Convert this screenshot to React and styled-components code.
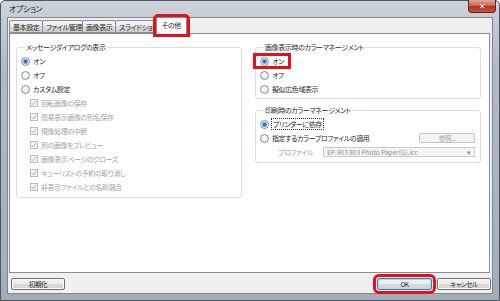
import styled, { createGlobalStyle, css } from "styled-components";

const GlobalStyle = createGlobalStyle`
  html, body { margin: 0; padding: 0; background: #fff; }
  body {
    width: 500px;
    height: 301px;
    overflow: hidden;
    font-family: "Noto Sans CJK JP", "Noto Sans", sans-serif;
  }
`;

// proportional kana, like the Meiryo UI face in the original dialog
const jp = css`
  font-family: "Noto Sans CJK JP", "Noto Sans", sans-serif;
  font-feature-settings: "palt" 1;
  font-variant-east-asian: proportional-width;
  letter-spacing: -0.4px;
`;

const redMark = css`
  outline: 3px solid #e5101b;
  outline-offset: ${({ $offset }) => $offset || 0}px;
`;

const Window = styled.div`
  box-sizing: border-box;
  width: 500px;
  height: 301px;
  display: flex;
  flex-direction: column;
  padding: 0 6px 6px 6px;
  border: 1px solid #4c5764;
  border-radius: 5px 5px 0 0;
  background: linear-gradient(#cdd3da, #b3bcc6 60px, #a2adb8);
`;

const TitleBar = styled.div`
  height: 16px;
  display: flex;
  justify-content: space-between;
  align-items: flex-start;
`;

const Title = styled.span`
  ${jp}
  padding: 3px 0 0 2px;
  font-size: 8px;
  line-height: 10px;
  color: #1b1f24;
`;

const CloseButton = styled.span`
  box-sizing: border-box;
  width: 28px;
  height: 13px;
  margin: -1px -3px 0 0;
  display: flex;
  align-items: center;
  justify-content: center;
  border: 1px solid #5d2420;
  border-top: none;
  border-radius: 0 0 4px 4px;
  background: linear-gradient(#e2a69c, #d0675a 45%, #b5321f 55%, #c9553c);
  color: #fff;
  font-family: "DejaVu Sans", sans-serif;
  font-size: 8px;
  font-weight: bold;
  text-shadow: 0 0 2px #5d1a12;
`;

const Content = styled.div`
  flex: 1;
  display: flex;
  flex-direction: column;
  background: #f0f0f0;
  border: 1px solid #7c8894;
`;

const TabRow = styled.div`
  height: 15px;
  display: flex;
  align-items: flex-end;
  padding-left: 2px;
`;

const Tab = styled.div`
  ${jp}
  box-sizing: border-box;
  width: ${({ $w }) => $w}px;
  height: ${({ $active }) => ($active ? 17 : 13)}px;
  margin-left: ${({ $active }) => ($active ? -2 : -1)}px;
  margin-bottom: ${({ $active }) => ($active ? -1 : 0)}px;
  position: relative;
  z-index: ${({ $active }) => ($active ? 2 : 1)};
  padding: ${({ $active }) => ($active ? "2px 0 0 5px" : "1px 0 0 3px")};
  overflow: hidden;
  white-space: nowrap;
  border: 1px solid #898c95;
  border-bottom: ${({ $active }) => ($active ? "none" : "1px solid #898c95")};
  border-radius: 2px 2px 0 0;
  background: ${({ $active }) =>
    $active ? "#fff" : "linear-gradient(#f4f4f4, #ebebeb 50%, #dddddd 50%, #cfcfcf)"};
  font-size: 7px;
  line-height: 10px;
  color: #2a2a2a;
  ${({ $marked }) => $marked && redMark}
`;

const Panel = styled.div`
  box-sizing: border-box;
  height: 240px;
  margin: 0 2px 0 1px;
  padding: 8px 8px 0 6px;
  display: grid;
  grid-template-columns: 226px 226px;
  column-gap: 13px;
  align-items: start;
  background: #fff;
  border: 1px solid #898c95;
`;

const Column = styled.div`
  display: flex;
  flex-direction: column;
  gap: 6px;
`;

const Group = styled.fieldset`
  margin: 0;
  padding: 2px 5px ${({ $pb }) => $pb || 2}px 4px;
  border: 1px solid #d5dfe5;
  border-radius: 3px;
  min-width: 0;
`;

const Legend = styled.legend`
  ${jp}
  margin-left: 4px;
  padding: 0 1px;
  font-size: 7px;
  line-height: 10px;
  color: #2a2a2a;
`;

const Row = styled.div`
  height: 14px;
  display: flex;
  align-items: center;
  padding-left: ${({ $indent }) => $indent || 0}px;
`;

const Option = styled.span`
  display: inline-flex;
  align-items: center;
  height: 10px;
  gap: 3px;
  ${({ $marked }) =>
    $marked &&
    css`
      padding: 0 4px;
      margin-left: -4px;
      ${redMark}
    `}
`;

const Radio = styled.span`
  box-sizing: border-box;
  width: 9px;
  height: 9px;
  border-radius: 50%;
  border: 1px solid #8d9196;
  background: ${({ $checked }) =>
    $checked
      ? "radial-gradient(circle, #1d5fa8 0, #3a8ad6 1.6px, #9fcdf2 2.6px, #eef2f6 3px)"
      : "radial-gradient(circle at 45% 40%, #fdfdfd, #dadde1)"};
`;

const Check = styled.span`
  box-sizing: border-box;
  width: 8px;
  height: 8px;
  display: inline-flex;
  border: 1px solid #b8bcc0;
  background: #f4f5f6;
  svg { width: 6px; height: 6px; }
`;

const Label = styled.span`
  ${jp}
  font-size: 7px;
  line-height: 10px;
  white-space: nowrap;
  color: ${({ $disabled }) => ($disabled ? "#a3a3a3" : "#2a2a2a")};
  ${({ $focus }) =>
    $focus &&
    css`
      outline: 1px dotted #333;
      outline-offset: 0;
      padding: 0 1px;
    `}
`;

const SmallButton = styled.span`
  ${jp}
  box-sizing: border-box;
  width: 56px;
  height: 10px;
  margin-left: auto;
  display: flex;
  align-items: center;
  justify-content: center;
  border: 1px solid #c1c4c8;
  border-radius: 2px;
  background: #f3f3f3;
  font-size: 6.5px;
  color: #a6a6a6;
`;

const FieldLabel = styled.span`
  ${jp}
  width: 45px;
  padding-left: 18px;
  flex-shrink: 0;
  font-size: 7px;
  line-height: 10px;
  color: #a3a3a3;
`;

const Combo = styled.span`
  ${jp}
  box-sizing: border-box;
  flex: 1;
  height: 10px;
  display: flex;
  align-items: center;
  justify-content: space-between;
  padding: 0 3px;
  border: 1px solid #c8cbce;
  background: #f4f4f4;
  font-size: 6.5px;
  letter-spacing: 0;
  color: #8e8e8e;
  white-space: nowrap;
`;

const ButtonRow = styled.div`
  flex: 1;
  display: flex;
  align-items: center;
  padding: 2px 1px 0 3px;
  gap: 5px;
`;

const Button = styled.span`
  ${jp}
  box-sizing: border-box;
  width: ${({ $w }) => $w}px;
  height: 12px;
  display: flex;
  align-items: center;
  justify-content: center;
  margin-left: ${({ $push }) => ($push ? "auto" : 0)};
  border: 1px solid ${({ $default }) => ($default ? "#3c7fb1" : "#707070")};
  border-radius: 2px;
  box-shadow: ${({ $default }) => ($default ? "inset 0 0 0 1px #a6dcf4" : "inset 0 0 0 1px #fbfbfb")};
  background: linear-gradient(#f2f2f2, #ebebeb 50%, #dddddd 50%, #cfcfcf);
  font-size: 6.5px;
  color: #2a2a2a;
  ${({ $marked }) => $marked && redMark}
`;

const CheckMark = () => (
  <svg viewBox="0 0 6 6">
    <path d="M0.8 3.2 L2.4 4.8 L5.3 1" fill="none" stroke="#a8acb0" strokeWidth="1" />
  </svg>
);

const tabs = [
  { label: "基本設定", w: 34 },
  { label: "ファイル管理", w: 41 },
  { label: "画像表示", w: 34 },
  { label: "スライドショー", w: 43 },
  { label: "その他", w: 31, active: true },
];

const subOptions = [
  "回転画像の保存",
  "簡易表示画像の別名保存",
  "現像処理の中断",
  "別の画像をプレビュー",
  "画像表示ページのクローズ",
  "キューリストの予約の取り消し",
  "非表示ファイルとの名称競合",
];

function RadioOption({ label, checked, marked, focus }) {
  return (
    <Row>
      <Option $marked={marked}>
        <Radio $checked={checked} />
        <Label $focus={focus}>{label}</Label>
      </Option>
    </Row>
  );
}

export default function App() {
  return (
    <>
      <GlobalStyle />
      <Window>
        <TitleBar>
          <Title>オプション</Title>
          <CloseButton>✕</CloseButton>
        </TitleBar>
        <Content>
          <TabRow>
            {tabs.map((t) => (
              <Tab key={t.label} $w={t.w} $active={t.active} $marked={t.active}>
                {t.label}
              </Tab>
            ))}
          </TabRow>
          <Panel>
            <Group $pb={3}>
              <Legend>メッセージダイアログの表示</Legend>
              <RadioOption label="オン" checked />
              <RadioOption label="オフ" />
              <RadioOption label="カスタム設定" />
              {subOptions.map((s) => (
                <Row key={s} $indent={9}>
                  <Option>
                    <Check>
                      <CheckMark />
                    </Check>
                    <Label $disabled>{s}</Label>
                  </Option>
                </Row>
              ))}
            </Group>
            <Column>
              <Group>
                <Legend>画像表示時のカラーマネージメント</Legend>
                <RadioOption label="オン" checked marked />
                <RadioOption label="オフ" />
                <RadioOption label="擬似広色域表示" />
              </Group>
              <Group $pb={3}>
                <Legend>印刷時のカラーマネージメント</Legend>
                <RadioOption label="プリンターに依存" checked focus />
                <Row>
                  <Option>
                    <Radio />
                    <Label>指定するカラープロファイルの適用</Label>
                  </Option>
                  <SmallButton>参照...</SmallButton>
                </Row>
                <Row>
                  <FieldLabel>プロファイル</FieldLabel>
                  <Combo>
                    <span>EP-903 803 Photo Paper(G).icc</span>
                    <span>▾</span>
                  </Combo>
                </Row>
              </Group>
            </Column>
          </Panel>
          <ButtonRow>
            <Button $w={54}>初期化</Button>
            <Button $w={55} $push $default $marked $offset={1}>
              OK
            </Button>
            <Button $w={54}>キャンセル</Button>
          </ButtonRow>
        </Content>
      </Window>
    </>
  );
}
